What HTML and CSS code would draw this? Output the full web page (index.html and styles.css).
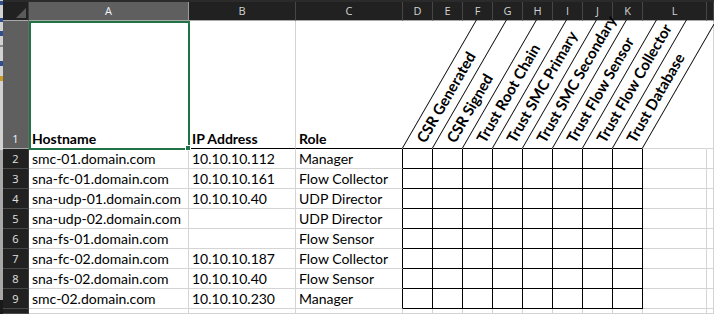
FILE: index.html
```html
<!DOCTYPE html>
<html>
<head>
<meta charset="utf-8">
<link rel="stylesheet" href="styles.css">
</head>
<body>
<div class="app">
  <div class="edge"></div>
  <div class="sheet">
    <div class="grid">
      <div class="corner"><span class="tri"></span></div>
      <div class="ch sel">A</div>
      <div class="ch">B</div>
      <div class="ch">C</div>
      <div class="ch">D</div>
      <div class="ch">E</div>
      <div class="ch">F</div>
      <div class="ch">G</div>
      <div class="ch">H</div>
      <div class="ch">I</div>
      <div class="ch">J</div>
      <div class="ch">K</div>
      <div class="ch">L</div>
      <div class="ch"></div>

      <div class="rh sel">1</div>
      <div class="c hd a1">Hostname<span class="handle"></span></div>
      <div class="c hd">IP Address</div>
      <div class="c hd last">Role</div>
      <div class="c tilt"><span class="lbl">CSR Generated</span></div>
      <div class="c tilt"><span class="lbl">CSR Signed</span></div>
      <div class="c tilt"><span class="lbl">Trust Root Chain</span></div>
      <div class="c tilt"><span class="lbl">Trust SMC Primary</span></div>
      <div class="c tilt"><span class="lbl">Trust SMC Secondary</span></div>
      <div class="c tilt"><span class="lbl">Trust Flow Sensor</span></div>
      <div class="c tilt"><span class="lbl">Trust Flow Collector</span></div>
      <div class="c tilt"><span class="lbl">Trust Database</span></div>
      <div class="c tilt end"></div>
      <div class="c"></div>

      <div class="rh">2</div>
      <div class="c">smc-01.domain.com</div><div class="c">10.10.10.112</div><div class="c bl">Manager</div>
      <div class="c bx"></div><div class="c bx"></div><div class="c bx"></div><div class="c bx"></div><div class="c bx"></div><div class="c bx"></div><div class="c bx"></div><div class="c bx"></div>
      <div class="c"></div><div class="c"></div>

      <div class="rh">3</div>
      <div class="c">sna-fc-01.domain.com</div><div class="c">10.10.10.161</div><div class="c bl">Flow Collector</div>
      <div class="c bx"></div><div class="c bx"></div><div class="c bx"></div><div class="c bx"></div><div class="c bx"></div><div class="c bx"></div><div class="c bx"></div><div class="c bx"></div>
      <div class="c"></div><div class="c"></div>

      <div class="rh">4</div>
      <div class="c">sna-udp-01.domain.com</div><div class="c">10.10.10.40</div><div class="c bl">UDP Director</div>
      <div class="c bx"></div><div class="c bx"></div><div class="c bx"></div><div class="c bx"></div><div class="c bx"></div><div class="c bx"></div><div class="c bx"></div><div class="c bx"></div>
      <div class="c"></div><div class="c"></div>

      <div class="rh">5</div>
      <div class="c">sna-udp-02.domain.com</div><div class="c"></div><div class="c bl">UDP Director</div>
      <div class="c bx"></div><div class="c bx"></div><div class="c bx"></div><div class="c bx"></div><div class="c bx"></div><div class="c bx"></div><div class="c bx"></div><div class="c bx"></div>
      <div class="c"></div><div class="c"></div>

      <div class="rh">6</div>
      <div class="c">sna-fs-01.domain.com</div><div class="c"></div><div class="c bl">Flow Sensor</div>
      <div class="c bx"></div><div class="c bx"></div><div class="c bx"></div><div class="c bx"></div><div class="c bx"></div><div class="c bx"></div><div class="c bx"></div><div class="c bx"></div>
      <div class="c"></div><div class="c"></div>

      <div class="rh">7</div>
      <div class="c">sna-fc-02.domain.com</div><div class="c">10.10.10.187</div><div class="c bl">Flow Collector</div>
      <div class="c bx"></div><div class="c bx"></div><div class="c bx"></div><div class="c bx"></div><div class="c bx"></div><div class="c bx"></div><div class="c bx"></div><div class="c bx"></div>
      <div class="c"></div><div class="c"></div>

      <div class="rh">8</div>
      <div class="c">sna-fs-02.domain.com</div><div class="c">10.10.10.40</div><div class="c bl">Flow Sensor</div>
      <div class="c bx"></div><div class="c bx"></div><div class="c bx"></div><div class="c bx"></div><div class="c bx"></div><div class="c bx"></div><div class="c bx"></div><div class="c bx"></div>
      <div class="c"></div><div class="c"></div>

      <div class="rh">9</div>
      <div class="c">smc-02.domain.com</div><div class="c">10.10.10.230</div><div class="c bl">Manager</div>
      <div class="c bx"></div><div class="c bx"></div><div class="c bx"></div><div class="c bx"></div><div class="c bx"></div><div class="c bx"></div><div class="c bx"></div><div class="c bx"></div>
      <div class="c"></div><div class="c"></div>

      <div class="rh"></div>
      <div class="c"></div><div class="c"></div><div class="c"></div>
      <div class="c"></div><div class="c"></div><div class="c"></div><div class="c"></div><div class="c"></div><div class="c"></div><div class="c"></div><div class="c"></div>
      <div class="c"></div><div class="c"></div>
    </div>
  </div>
</div>
</body>
</html>
```

FILE: styles.css
```css
html, body {
  margin: 0;
  padding: 0;
  height: 100%;
}
body {
  background: #262626;
  overflow: hidden;
  font-family: "Lato", "Liberation Sans", sans-serif;
}
.app {
  display: flex;
  height: 314px;
}
.edge {
  width: 3px;
  flex: none;
  background:
    linear-gradient(#2f4f8f, #2f4f8f) 0 1px / 3px 4px no-repeat,
    linear-gradient(#2f4f8f, #2f4f8f) 0 18px / 3px 4px no-repeat,
    linear-gradient(#2f4f8f, #2f4f8f) 0 31px / 3px 5px no-repeat,
    linear-gradient(#8a8a8a, #8a8a8a) 0 45px / 3px 2px no-repeat,
    linear-gradient(#2f4f8f, #2f4f8f) 0 61px / 3px 5px no-repeat,
    linear-gradient(#c79a2a, #c79a2a) 0 76px / 3px 5px no-repeat,
    linear-gradient(#d2d2d2 0 150px, #a8a8a8 150px 300px, #1a1a1a 300px);
}
.sheet {
  flex: 1;
  padding-top: 2px;
  background: #2b2b2b;
  overflow: hidden;
}
.grid {
  display: grid;
  grid-template-columns: 26px 160px 107px 107px repeat(8, 30px) 64px 1fr;
  grid-template-rows: 19px 128px repeat(8, 20px) 1fr;
  height: 312px;
  background: #ffffff;
}
.grid > div {
  box-sizing: border-box;
  min-width: 0;
  min-height: 0;
}

/* headers */
.corner {
  background: #212121;
  border-right: 1px solid #3c3c3c;
  border-bottom: 1px solid #a9a9a9;
  position: relative;
}
.tri {
  position: absolute;
  right: 2px;
  bottom: 2px;
  width: 0;
  height: 0;
  border-left: 10px solid transparent;
  border-bottom: 10px solid #5a5a5a;
}
.ch {
  background: #212121;
  color: #d4d4d4;
  font-family: "Open Sans", "Noto Sans", sans-serif;
  font-size: 11px;
  line-height: 18px;
  text-align: center;
  border-right: 1px solid #464646;
  border-bottom: 1px solid #a9a9a9;
}
.ch.sel {
  background: #5f5f5f;
  color: #f2f4ff;
  border-right-color: #9a9a9a;
}
.rh {
  background: #212121;
  color: #e2e2e2;
  font-family: "Open Sans", "Noto Sans", sans-serif;
  font-size: 11px;
  line-height: 19px;
  text-align: center;
  border-right: 1px solid #3c3c3c;
  border-bottom: 1px solid #484848;
  display: flex;
  align-items: flex-end;
  justify-content: center;
  overflow: hidden;
}
.rh.sel {
  background: #5f5f5f;
  color: #eef2ff;
  border-right-color: #6a6a6a;
  border-bottom-color: #a9a9a9;
}

/* cells */
.c {
  border-right: 1px solid #d4d4d4;
  border-bottom: 1px solid #d4d4d4;
  color: #000;
  font-size: 14px;
  line-height: 15px;
  padding: 0 0 2px 3px;
  white-space: nowrap;
  display: flex;
  align-items: flex-end;
}
.c.hd {
  font-weight: 700;
  border-bottom-color: #000;
}
.c.hd.last {
  border-right-color: transparent;
}
.c.bl {
  border-right-color: #000;
}
.c.bx {
  border-right-color: #000;
  border-bottom-color: #000;
}
.a1 {
  position: relative;
}
.a1::after {
  content: "";
  position: absolute;
  left: 0;
  top: 0;
  width: 161px;
  height: 129px;
  box-sizing: border-box;
  border: 2px solid #217346;
  z-index: 2;
}
.handle {
  position: absolute;
  left: 156px;
  top: 124px;
  width: 6px;
  height: 6px;
  box-sizing: border-box;
  background: #217346;
  border: 1px solid #ffffff;
  z-index: 3;
}

/* slanted header cells */
.c.tilt {
  position: relative;
  border-right-color: transparent;
  border-bottom-color: #000;
  padding: 0;
}
.c.tilt.end {
  border-bottom-color: #d4d4d4;
}
.c.tilt::before {
  content: "";
  position: absolute;
  left: -1px;
  bottom: 0;
  height: 128px;
  width: 0;
  border-left: 1.3px solid #000;
  transform-origin: 0 100%;
  transform: skewX(-30deg);
}
.lbl {
  position: absolute;
  left: 24px;
  bottom: 3px;
  font-weight: 700;
  font-size: 15px;
  line-height: 15px;
  white-space: nowrap;
  transform-origin: 0 100%;
  transform: rotate(-60deg);
}
```
